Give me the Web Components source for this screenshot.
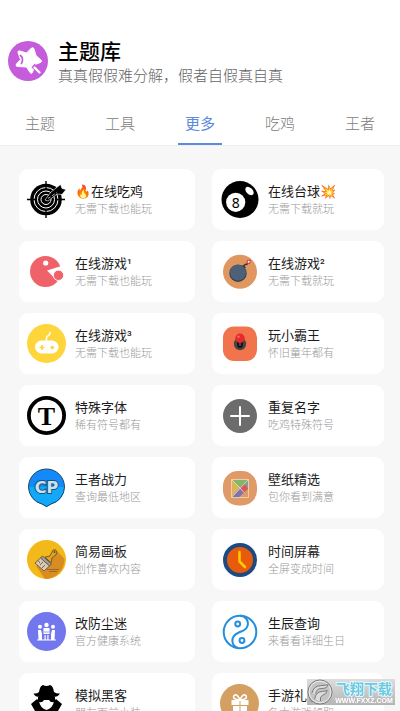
<!DOCTYPE html>
<html lang="zh-CN">
<head>
<meta charset="utf-8">
<meta name="viewport" content="width=device-width, initial-scale=1">
<title>主题库</title>
<style>
  :root {
    --accent: #5b8ade;
    --page-background: #f7f7f7;
    --muted: #999;
  }

  body {
    margin: 0;
    font-family: "Noto Sans CJK SC", "Noto Sans", sans-serif;
    color: #1c1c1c;
    background: var(--page-background);
  }
</style>
</head>
<body>

<theme-app>
  <theme-header slot="header">
    <svg slot="logo" viewBox="0 0 40 40" aria-hidden="true">
      <circle cx="20" cy="20" r="20" fill="#c45cdb"/>
      <path d="M26 8 L28 14.500 L33 19 Q34.500 20.500 32.500 21.500 L27 23.500 L24.500 31.500 Q23.500 33.500 22 31.500 L18.500 26 L9.500 25.500 Q7 25 8.500 23 L12.500 18.500 L10 11.500 Q9.500 9.500 12 10 L18.500 12 L23.500 7 Q25.500 6 26 8 Z" fill="#fff" stroke="#fff" stroke-linejoin="round"/>
      <path d="M12.500 14.500 Q16 17 13.500 22.500" fill="none" stroke="#c45cdb" stroke-width="1.800" stroke-linecap="round"/>
      <path d="M25 24.500 L33 32" stroke="#c45cdb" stroke-width="4.500"/>
      <path d="M26.500 26.500 L31.500 31.500" stroke="#fff" stroke-width="2.400" stroke-linecap="round"/>
    </svg>
    <span slot="title">主题库</span>
    <span slot="subtitle">真真假假难分解，假者自假真自真</span>
  </theme-header>

  <tab-bar slot="header">
    <tab-item>主题</tab-item>
    <tab-item>工具</tab-item>
    <tab-item selected>更多</tab-item>
    <tab-item>吃鸡</tab-item>
    <tab-item>王者</tab-item>
  </tab-bar>

  <tool-grid>
    <tool-card>
      <svg slot="icon" viewBox="0 0 39 39" aria-hidden="true">
        <circle cx="19" cy="19.500" r="15.800"/>
        <g fill="none" stroke="#fff" stroke-width="1">
          <circle cx="19" cy="19.500" r="12"/>
          <circle cx="19" cy="19.500" r="8.500"/>
          <circle cx="19" cy="19.500" r="5"/>
        </g>
        <path d="M19 1v8M19 30v8M0 19.500h8M30 19.500h8" stroke="#000" stroke-width="1.400"/>
        <path d="M18 20 L24 12 L33.500 4.500 L35 8.500 L39 9.500 L35 14.500 L30 14 L21 21 Z" stroke="#fff" stroke-width=".6"/>
        <path d="M21 18.500 L30 12.500" stroke="#fff" stroke-width=".7" stroke-dasharray="3 2"/>
      </svg>
      <span slot="title">🔥在线吃鸡</span>
      <span slot="note">无需下载也能玩</span>
    </tool-card>

    <tool-card>
      <svg slot="icon" viewBox="0 0 39 39" aria-hidden="true">
        <circle cx="20" cy="19.500" r="18.500"/>
        <circle cx="15.700" cy="22.300" r="9.600" fill="#fff"/>
        <text x="15.700" y="27.500" font-family="Noto Sans" font-size="14" text-anchor="middle">8</text>
        <ellipse cx="29.500" cy="11" rx="5" ry="3.200" fill="#fff" transform="rotate(45 29.500 11)"/>
      </svg>
      <span slot="title">在线台球💥</span>
      <span slot="note">无需下载就玩</span>
    </tool-card>

    <tool-card>
      <svg slot="icon" viewBox="0 0 39 39" aria-hidden="true">
        <circle cx="18.500" cy="19.500" r="15.500" fill="#f0626a"/>
        <path d="M20 18.500 L36 13.500 V22 L27.500 26 Z" fill="#fff"/>
        <circle cx="18.700" cy="11" r="2.600" fill="#fff"/>
        <circle cx="31.500" cy="23.300" r="5.200" fill="#f0626a" stroke="#fff"/>
      </svg>
      <span slot="title">在线游戏¹</span>
      <span slot="note">无需下载也能玩</span>
    </tool-card>

    <tool-card>
      <svg slot="icon" viewBox="0 0 39 39" aria-hidden="true">
        <circle cx="20" cy="19.700" r="17" fill="#df975f"/>
        <path d="M23 15 Q25 11.500 28 12" fill="none" stroke="#4a3834" stroke-width="1.500"/>
        <path d="M22 14 L25 16.500" stroke="#36424f" stroke-width="3"/>
        <circle cx="18" cy="21.200" r="8.700" fill="#33404d"/>
        <circle cx="18" cy="20.700" r="8" fill="#4c6078"/>
        <path d="M27 8 L31 7.500 L30 12 L26.500 11.500 Z" fill="#e23b3b"/>
        <circle cx="28.700" cy="9.800" r="1" fill="#fff"/>
      </svg>
      <span slot="title">在线游戏²</span>
      <span slot="note">无需下载就玩</span>
    </tool-card>

    <tool-card>
      <svg slot="icon" viewBox="0 0 39 39" aria-hidden="true">
        <circle cx="19.500" cy="19.500" r="19.500" fill="#ffd53c"/>
        <path d="M19.500 17 V14 Q19.500 12.500 21.500 11.500 Q23 10.500 23 8.500" fill="none" stroke="#fff" stroke-width="1.500" stroke-linecap="round"/>
        <rect x="8" y="16.500" width="23.500" height="13" rx="6.500" fill="#fff"/>
        <path d="M15 21v5M12.500 23.500h5" stroke="#ffd53c" stroke-width="1.700"/>
        <circle cx="25.300" cy="23.500" r="1.800" fill="#ffd53c"/>
      </svg>
      <span slot="title">在线游戏³</span>
      <span slot="note">无需下载也能玩</span>
    </tool-card>

    <tool-card>
      <svg slot="icon" viewBox="0 0 39 39" aria-hidden="true">
        <rect x="3" y="2.500" width="34" height="34.500" rx="11" fill="#f2744d"/>
        <circle cx="20" cy="20" r="6.200" fill="#4b4346"/>
        <path d="M18 18v3a2 2 0 0 0 4 0v-3" fill="none" stroke="#121212" stroke-width="1.700"/>
        <circle cx="20" cy="14.200" r="4.700" fill="#e62a2c"/>
        <circle cx="18.500" cy="12.700" r="1.200" fill="#f46a62"/>
      </svg>
      <span slot="title">玩小霸王</span>
      <span slot="note">怀旧童年都有</span>
    </tool-card>

    <tool-card>
      <svg slot="icon" viewBox="0 0 39 39" aria-hidden="true">
        <circle cx="19.500" cy="19.500" r="17.600" fill="#fff" stroke="#000" stroke-width="3.800"/>
        <text x="19.500" y="28.500" font-family="Liberation Serif" font-weight="bold" font-size="26" text-anchor="middle">T</text>
      </svg>
      <span slot="title">特殊字体</span>
      <span slot="note">稀有符号都有</span>
    </tool-card>

    <tool-card>
      <svg slot="icon" viewBox="0 0 39 39" aria-hidden="true">
        <circle cx="20" cy="20" r="17" fill="#6c6c6c"/>
        <path d="M20 11v18M11 20h18" stroke="#fff" stroke-width="2" stroke-linecap="round"/>
      </svg>
      <span slot="title">重复名字</span>
      <span slot="note">吃鸡特殊符号</span>
    </tool-card>

    <tool-card>
      <svg slot="icon" viewBox="0 0 39 39" aria-hidden="true">
        <path d="M1.500 19 A18 18 0 1 1 37.500 19 A18 18 0 0 1 24 36.200 L19.500 39 L15 36.200 A18 18 0 0 1 1.500 19 Z" fill="#1389fb"/>
        <path d="M1.500 19 H37.500 A18 18 0 0 1 24 36.200 L19.500 39 L15 36.200 A18 18 0 0 1 1.500 19 Z" fill="#12a9fa"/>
        <path d="M1.500 19 A18 18 0 1 1 37.500 19 A18 18 0 0 1 24 36 L19.500 38.500 L15 36 A18 18 0 0 1 1.500 19 Z" fill="none" stroke="#1d4a6c"/>
        <text x="19.500" y="24.500" font-family="DejaVu Sans" font-weight="bold" font-size="16" text-anchor="middle" fill="#c3e4f8" stroke="#24506f" stroke-width="2" paint-order="stroke">CP</text>
      </svg>
      <span slot="title">王者战力</span>
      <span slot="note">查询最低地区</span>
    </tool-card>

    <tool-card>
      <svg slot="icon" viewBox="0 0 39 39" aria-hidden="true">
        <rect x="3" y="3" width="34" height="34.500" rx="15" fill="#e09a68"/>
        <path d="M11.500 11.500h17v18h-17z" fill="#d9a063"/>
        <path d="M11.500 11.500h17L20 20z" fill="#84b568"/>
        <path d="M11.500 11.500L20 20L11.500 29z" fill="#d9b35e"/>
        <path d="M28.500 11.500v7L20 20z" fill="#6aa7a3"/>
        <path d="M24 16l4.500 4.500L24 25l-4-5z" fill="#d9575a"/>
        <path d="M20 20l4 4.500l-5 5h-7.500z" fill="#7d72b5"/>
        <path d="M28.500 20.500v9H19z" fill="#dc9a6b"/>
        <path d="M11.500 11.500h17v18h-17zL20 20M28.500 11.500L11.500 29.500M20 20l4 4.500" fill="none" stroke="#f2ddb5" stroke-width=".8"/>
      </svg>
      <span slot="title">壁纸精选</span>
      <span slot="note">包你看到满意</span>
    </tool-card>

    <tool-card>
      <svg slot="icon" viewBox="0 0 39 39" aria-hidden="true">
        <circle cx="19.500" cy="19.500" r="19.500" fill="#f3b91a"/>
        <path d="M30 11 L37.500 19 A19.500 19.500 0 0 1 18 39 L9 26 Z" fill="#d98d20"/>
        <g stroke="#59483a" stroke-width=".8" stroke-linejoin="round">
          <path d="M18 17 L23 16 L26 10 Q29 8.500 30 12 Q30.500 14.500 25 18 L24 23 Z" fill="#e2a21f"/>
          <path d="M15.500 16 L24.500 24 L22.500 26 L13.500 18 Z" fill="#a6a09a"/>
          <path d="M13.500 18 L22.500 26 L17 31 L8 23 Z" fill="#d9cbb2"/>
          <path d="M11 20.500 L13 23M13 25l3-3M15 28l3-3" fill="none"/>
        </g>
        <circle cx="27.500" cy="12" r="1" fill="#59483a"/>
        <path d="M20 29.500h12M22 31.500h8" stroke="#7a5a2c" stroke-width=".7"/>
      </svg>
      <span slot="title">简易画板</span>
      <span slot="note">创作喜欢内容</span>
    </tool-card>

    <tool-card>
      <svg slot="icon" viewBox="0 0 39 39" aria-hidden="true">
        <circle cx="20" cy="20" r="15" fill="#e95b0c" stroke="#1b4b80" stroke-width="4"/>
        <path d="M19.500 12v9.500l5.500 5.500" fill="none" stroke="#fc0" stroke-width="2.500" stroke-linecap="round" stroke-linejoin="round"/>
      </svg>
      <span slot="title">时间屏幕</span>
      <span slot="note">全屏变成时间</span>
    </tool-card>

    <tool-card>
      <svg slot="icon" viewBox="0 0 39 39" aria-hidden="true">
        <circle cx="19.500" cy="19.500" r="19.500" fill="#7377ee"/>
        <g fill="#fff">
          <circle cx="13" cy="14.800" r="2"/>
          <circle cx="19.500" cy="13" r="2.200"/>
          <circle cx="26" cy="14.800" r="2"/>
          <path d="M11 18h3l1 4v6h-3.500zM28 18h-3l-1 4v6h3.500z"/>
          <path d="M16.500 16h6v6h-6zM17.500 23h1.200v5h-1.200zM20.300 23h1.200v5h-1.200z"/>
          <path d="M10 27.500h19v1H10z"/>
        </g>
        <path d="M17 20h5" stroke="#7377ee" stroke-width=".7"/>
      </svg>
      <span slot="title">改防尘迷</span>
      <span slot="note">官方健康系统</span>
    </tool-card>

    <tool-card>
      <svg slot="icon" viewBox="0 0 39 39" aria-hidden="true">
        <g fill="none" stroke="#258fdd" stroke-width="2">
          <circle cx="20" cy="20" r="16.300"/>
          <path d="M20 3.700 C26 4 29 9 27.500 14 C26 19 21 19 18 21 C11 24 10 33 18 36"/>
          <circle cx="17.700" cy="12" r="2.400"/>
          <circle cx="22" cy="28.500" r="2.400"/>
        </g>
      </svg>
      <span slot="title">生辰查询</span>
      <span slot="note">来看看详细生日</span>
    </tool-card>

    <tool-card>
      <svg slot="icon" viewBox="0 0 39 39" aria-hidden="true">
        <path d="M6.500 9.500 Q10 10 12 8 Q13 1.500 16 1 Q19.500 3 23 1 Q26 1.500 27 8 Q30 10 33 9.500 Q31 13 26 13 H13 Q8 13 6.500 9.500 Z"/>
        <path d="M11 13h17v4.500q-4 2-6-1.500h-5q-2 3.500-6 1.500z"/>
        <path d="M3 39 Q4 30 8 27 L4 20 L10 15 L12 17 Q13 24 19.500 26 Q26 24 27 17 L29 15 L35 20 L31 27 Q35 30 36 39 Z"/>
        <path d="M13.500 18.500 h12 q-1.500 4-6 5 q-4.500-1-6-5z" fill="#fff"/>
        <path d="M17 27l2.500 2l2.500-2l1 4l-3.500 8l-3.500-8z" fill="#fff"/>
        <path d="M19.500 29l1.500 2l-1.500 8l-1.500-8z"/>
      </svg>
      <span slot="title">模拟黑客</span>
      <span slot="note">朋友面前小装</span>
    </tool-card>

    <tool-card>
      <svg slot="icon" viewBox="0 0 39 39" aria-hidden="true">
        <circle cx="19.500" cy="19.500" r="19.500" fill="#d3a062"/>
        <path d="M20 16 Q12 15.500 14 11.500 Q17 9 20 16 Q23 9 26 11.500 Q28 15.500 20 16 Z" fill="none" stroke="#fff" stroke-width="1.600"/>
        <path d="M11.500 16h8v5h-8zM20.500 16h8v5h-8zM13 22h6.500v8H13zM20.500 22H27v8h-6.500z" fill="#fff"/>
      </svg>
      <span slot="title">手游礼包</span>
      <span slot="note">各大游戏领取</span>
    </tool-card>
  </tool-grid>

  <site-mark slot="overlay">
    <span slot="name">飞翔下载</span>
    <span slot="address">WWW.FXXZ.COM</span>
  </site-mark>
</theme-app>

<script>
class ThemeApp extends HTMLElement {
  constructor() {
    super();
    this.attachShadow( { mode: "open" } );
    this.shadowRoot.innerHTML = /*html*/`
      <style>
        :host {
          display: flex;
          flex-direction: column;
          height: 100vh;
        }

        header {
          flex: none;
          background: #fff;
          border-bottom: 1px solid #efefef;
        }

        main {
          flex: 1;
          min-height: 0;
          overflow-y: auto;
          scrollbar-width: none;
        }
      </style>
      <header><slot name="header"></slot></header>
      <main><slot></slot></main>
      <slot name="overlay"></slot>
    `;
  }
}

class ThemeHeader extends HTMLElement {
  constructor() {
    super();
    this.attachShadow( { mode: "open" } );
    this.shadowRoot.innerHTML = /*html*/`
      <style>
        :host {
          display: flex;
          align-items: center;
          gap: 10px;
          padding: 36px 8px 14px;
        }

        ::slotted(svg) {
          flex: none;
          width: 40px;
          height: 40px;
        }

        h1, p {
          margin: 0;
          white-space: nowrap;
        }

        h1 {
          font-size: 21px;
          font-weight: 500;
          line-height: 28px;
          color: #000;
        }

        p {
          font-size: 15px;
          font-weight: 300;
          line-height: 22px;
          color: #666;
        }
      </style>
      <slot name="logo"></slot>
      <div>
        <h1><slot name="title"></slot></h1>
        <p><slot name="subtitle"></slot></p>
      </div>
    `;
  }
}

class TabBar extends HTMLElement {
  constructor() {
    super();
    this.attachShadow( { mode: "open" } );
    this.shadowRoot.innerHTML = /*html*/`
      <style>
        nav {
          display: flex;
        }

        ::slotted(tab-item) {
          flex: 1;
        }
      </style>
      <nav><slot></slot></nav>
    `;
  }
}

class TabItem extends HTMLElement {
  constructor() {
    super();
    this.attachShadow( { mode: "open" } );
    this.shadowRoot.innerHTML = /*html*/`
      <style>
        :host {
          display: flex;
          justify-content: center;
        }

        button {
          min-width: 44px;
          height: 45px;
          padding: 2px 0 0;
          border: 0;
          border-bottom: 2px solid transparent;
          background: none;
          font: inherit;
          font-size: 15px;
          font-weight: 300;
          color: #808080;
        }

        :host([selected]) button {
          border-color: var(--accent);
          font-weight: 400;
          color: var(--accent);
        }
      </style>
      <button type="button"><slot></slot></button>
    `;
  }

  connectedCallback() {
    if (this.hasAttribute('selected')) {
      this.shadowRoot.querySelector('button').setAttribute('aria-current', 'page');
    }
  }
}

class ToolGrid extends HTMLElement {
  constructor() {
    super();
    this.attachShadow( { mode: "open" } );
    this.shadowRoot.innerHTML = /*html*/`
      <style>
        :host {
          display: grid;
          grid-template-columns: 44fr 43fr;
          gap: 11px 17px;
          padding: 23px 16px 23px 19px;
        }
      </style>
      <slot></slot>
    `;
  }
}

class ToolCard extends HTMLElement {
  constructor() {
    super();
    this.attachShadow( { mode: "open" } );
    this.shadowRoot.innerHTML = /*html*/`
      <style>
        :host {
          display: block;
          min-width: 0;
        }

        a {
          display: flex;
          align-items: center;
          gap: 9px;
          padding: 11px 8px;
          border-radius: 9px;
          background: #fff;
          color: inherit;
          text-decoration: none;
          white-space: nowrap;
        }

        ::slotted(svg) {
          flex: none;
          width: 39px;
          height: 39px;
        }

        .text {
          display: flex;
          flex-direction: column;
        }

        .title {
          font-family: Roboto, "Noto Sans CJK SC", sans-serif;
          font-size: 13px;
          line-height: 18px;
        }

        .note {
          font-size: 11px;
          font-weight: 300;
          line-height: 15px;
          color: var(--muted);
        }
      </style>
      <a href="#">
        <slot name="icon"></slot>
        <div class="text">
          <span class="title"><slot name="title"></slot></span>
          <span class="note"><slot name="note"></slot></span>
        </div>
      </a>
    `;
  }
}

class SiteMark extends HTMLElement {
  constructor() {
    super();
    this.attachShadow( { mode: "open" } );
    this.shadowRoot.innerHTML = /*html*/`
      <style>
        :host {
          position: fixed;
          right: 5px;
          bottom: 6px;
          display: flex;
          align-items: center;
          background: linear-gradient(#d4d4d4cc, #a9a9a9dd);
        }

        svg {
          width: 26px;
          height: 26px;
        }

        div {
          display: flex;
          flex-direction: column;
          align-items: center;
          width: 62px;
          white-space: nowrap;
        }

        .name {
          font-size: 14px;
          font-weight: 700;
          line-height: 16px;
          color: #6cc9e2;
          -webkit-text-stroke: 2px #e6f6fa;
          paint-order: stroke fill;
        }

        .address {
          font: bold 7px/9px "Liberation Sans", sans-serif;
          color: #fff;
        }
      </style>
      <svg viewBox="0 0 27 27" aria-hidden="true">
        <circle cx="13.500" cy="13.500" r="12.500" fill="#c4c4c4" stroke="#777"/>
        <circle cx="13.500" cy="13.500" r="11.300" fill="none" stroke="#eee"/>
        <path d="M5 15 Q7 7 14 7 L22 6 Q21 10 14 10 Q10 10 9 15 M8 21 Q9 13 16 13 L21 12 Q20 16 16 17 Q13 18 14 23" fill="#ddd" stroke="#777"/>
      </svg>
      <div>
        <span class="name"><slot name="name"></slot></span>
        <span class="address"><slot name="address"></slot></span>
      </div>
    `;
  }
}

customElements.define('theme-app', ThemeApp);
customElements.define('theme-header', ThemeHeader);
customElements.define('tab-bar', TabBar);
customElements.define('tab-item', TabItem);
customElements.define('tool-grid', ToolGrid);
customElements.define('tool-card', ToolCard);
customElements.define('site-mark', SiteMark);
</script>
</body>
</html>
